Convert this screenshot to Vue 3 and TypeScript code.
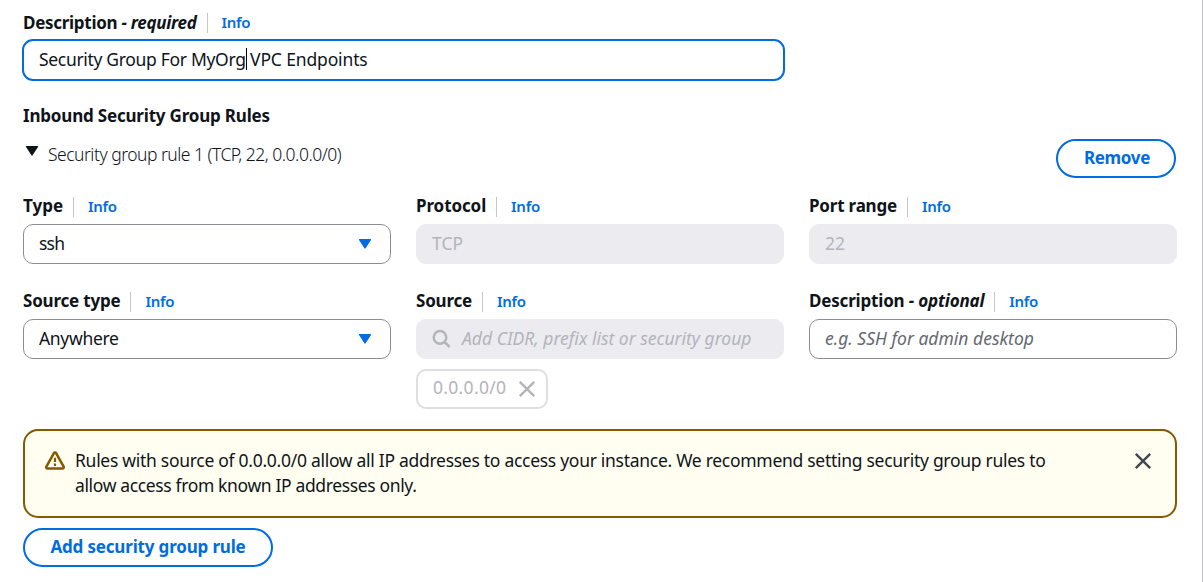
<script setup lang="ts">
import { ref } from 'vue'

const groupDescription = { before: 'Security Group For MyOrg', after: ' VPC Endpoints' }
const expanded = ref(true)
const alertOpen = ref(true)
</script>

<template>
  <main class="panel">
    <div class="field description">
      <div class="label-row">
        <span class="label t-desc">Description <i>- required</i></span>
        <a class="info">Info</a>
      </div>
      <div class="control focused">
        <span class="t-value">{{ groupDescription.before }}</span><span class="caret"></span><span class="t-after">{{ groupDescription.after }}</span>
      </div>
    </div>

    <h2 class="heading">Inbound Security Group Rules</h2>

    <div class="rule-header">
      <div class="rule-title" @click="expanded = !expanded">
        <svg class="arrow" viewBox="0 0 14 12"><path d="M1.6 1.6h10.8L7 9.9z" /></svg>
        <span class="t-rule">Security group rule 1 (TCP, 22, 0.0.0.0/0)</span>
      </div>
      <button class="button remove">Remove</button>
    </div>

    <section class="grid">
      <div class="field">
        <div class="label-row"><span class="label t-type">Type</span><a class="info">Info</a></div>
        <div class="control select">
          <span class="t-ssh">ssh</span>
          <svg class="arrow" viewBox="0 0 14 12"><path d="M1.6 1.6h10.8L7 9.9z" /></svg>
        </div>
      </div>
      <div class="field">
        <div class="label-row"><span class="label t-protocol">Protocol</span><a class="info">Info</a></div>
        <div class="control disabled"><span>TCP</span></div>
      </div>
      <div class="field">
        <div class="label-row"><span class="label">Port range</span><a class="info">Info</a></div>
        <div class="control disabled"><span>22</span></div>
      </div>
      <div class="field">
        <div class="label-row"><span class="label">Source type</span><a class="info">Info</a></div>
        <div class="control select">
          <span class="t-any">Anywhere</span>
          <svg class="arrow" viewBox="0 0 14 12"><path d="M1.6 1.6h10.8L7 9.9z" /></svg>
        </div>
      </div>
      <div class="field">
        <div class="label-row"><span class="label">Source</span><a class="info">Info</a></div>
        <div class="control disabled search">
          <svg class="magnifier" viewBox="0 0 20 20"><circle cx="8" cy="8.4" r="6.3" /><path d="M12.6 13l5 5" /></svg>
          <i class="t-cidr">Add CIDR, prefix list or security group</i>
        </div>
        <div class="token">
          <span class="t-token">0.0.0.0/0</span>
          <svg class="cross" viewBox="0 0 18 18"><path d="M1.8 1.8l14.4 14.4M16.2 1.8L1.8 16.2" /></svg>
        </div>
      </div>
      <div class="field">
        <div class="label-row"><span class="label t-opt">Description <i>- optional</i></span><a class="info">Info</a></div>
        <div class="control placeholder"><i>e.g. SSH for admin desktop</i></div>
      </div>
    </section>

    <div v-if="alertOpen" class="alert">
      <svg class="warning" viewBox="0 0 20 20">
        <path class="outline" d="M8.9 2.1a1.3 1.3 0 0 1 2.2 0l7.5 13.6a1.2 1.2 0 0 1-1 1.8H2.4a1.2 1.2 0 0 1-1-1.8z" />
        <path class="mark" d="M10 6.8v4.2M10 12.6v2.3" />
      </svg>
      <p>
        <span class="t-alert1">Rules with source of 0.0.0.0/0 allow all IP addresses to access your instance. We recommend setting security group rules to</span><br />
        <span class="t-alert2">allow access from known IP addresses only.</span>
      </p>
      <svg class="cross" viewBox="0 0 18 18" @click="alertOpen = false"><path d="M1.8 1.8l14.4 14.4M16.2 1.8L1.8 16.2" /></svg>
    </div>

    <button class="button add">Add security group rule</button>
  </main>
</template>

<style>
body { background: #fff; overflow: hidden; }
</style>

<style scoped>
.panel {
  box-sizing: border-box;
  width: 1203px;
  height: 582px;
  padding: 10px 25px 0 23px;
  border-right: 1px solid #c2c2c6;
  font: 17.5px/25px "Noto Sans", sans-serif;
  color: #0f141a;
  white-space: nowrap;
}
.description { width: 761px; }
.label-row { display: flex; align-items: center; height: 25px; margin-bottom: 5px; }
.label { padding-bottom: 1px; font-size: 17px; font-weight: 700; letter-spacing: -0.2px; }
.grid .label { padding-bottom: 2px; }
.info {
  display: flex;
  align-items: center;
  box-sizing: border-box;
  height: 20px;
  margin: 1px 0 0 10px;
  padding: 0 0 2px 14px;
  border-left: 1px solid #c6c6cd;
  color: #006ce0;
  font-size: 15px;
  font-weight: 600;
  letter-spacing: -0.3px;
}
.control {
  box-sizing: border-box;
  display: flex;
  align-items: center;
  height: 40px;
  padding: 0 15px 2px;
  border: 1px solid #8c8c94;
  border-radius: 10px;
  white-space: pre;
}
.focused { border-color: transparent; outline: 2px solid #006ce0; outline-offset: -1px; }
.caret { width: 1px; height: 22px; margin-right: -1px; background: #000; }
.disabled { border-color: #ebebf0; background: #ebebf0; color: #b4b4bb; }
.placeholder { color: #656871; }
.select { justify-content: space-between; padding-right: 18px; }
.arrow { width: 14px; height: 12px; fill: #006ce0; stroke: #006ce0; stroke-width: 1.4; stroke-linejoin: round; }
.select .arrow { margin-top: 2px; }
.heading { margin: 23px 0 0; font-size: 17px; line-height: 25px; font-weight: 700; letter-spacing: -0.19px; }
.rule-header { display: flex; justify-content: space-between; height: 39px; margin: 11px 1px 0 0; }
.rule-title { display: flex; align-items: flex-start; padding: 3px 0 0 2px; font-weight: 300; }
.rule-title .arrow { margin: 3px 9px 0 0; fill: #0f141a; stroke: #0f141a; }
.button {
  box-sizing: border-box;
  height: 39px;
  padding: 0 0 2px;
  border: 2px solid #006ce0;
  border-radius: 20px;
  background: #fff;
  color: #006ce0;
  font: 700 17px/25px "Noto Sans", sans-serif;
  letter-spacing: -0.17px;
}
.remove { width: 120px; padding-left: 2px; letter-spacing: -0.3px; }
.add { display: block; width: 250px; margin-top: 10px; }
.grid { display: grid; grid-template-columns: repeat(3, 368px); gap: 25px; margin-top: 16px; }
.search { justify-content: flex-start; }
.magnifier { width: 20px; height: 20px; margin: 2px 10px 0 0; fill: none; stroke: #b4b4bb; stroke-width: 2.5; }
.token {
  box-sizing: border-box;
  display: flex;
  align-items: center;
  justify-content: space-between;
  width: 132px;
  height: 40px;
  margin-top: 10px;
  padding: 0 10px 3px 15px;
  border: 2px solid #dedee3;
  border-radius: 10px;
  color: #b4b4bb;
}
.cross { width: 18px; height: 18px; fill: none; stroke: #424650; stroke-width: 2.4; }
.token .cross { margin-top: 3px; stroke: #b4b4bb; }
.alert {
  box-sizing: border-box;
  display: flex;
  align-items: flex-start;
  height: 89px;
  margin-top: 20px;
  padding: 17px 23px 0 20px;
  border: 2px solid #855900;
  border-radius: 15px;
  background: #fffef0;
}
.alert p { flex: 1; margin: 0 0 0 10px; }
.alert .cross { margin-top: 4px; }
.warning { width: 20px; height: 20px; margin-top: 3px; fill: none; stroke: #855900; stroke-width: 2.5; }
.warning .mark { stroke-width: 2.2; }

.t-desc { letter-spacing: -0.29px; }
.t-opt { letter-spacing: -0.18px; }
.t-type { letter-spacing: 0; }
.t-protocol { letter-spacing: -0.1px; }
.t-value { letter-spacing: -0.32px; }
.t-after { letter-spacing: -0.14px; }
.t-rule { letter-spacing: -0.5px; }
.t-ssh { letter-spacing: -0.8px; }
.t-any { letter-spacing: -0.32px; }
.t-token { letter-spacing: 0.3px; }
.t-alert1 { letter-spacing: -0.287px; }
.t-alert2 { letter-spacing: -0.36px; }
</style>
